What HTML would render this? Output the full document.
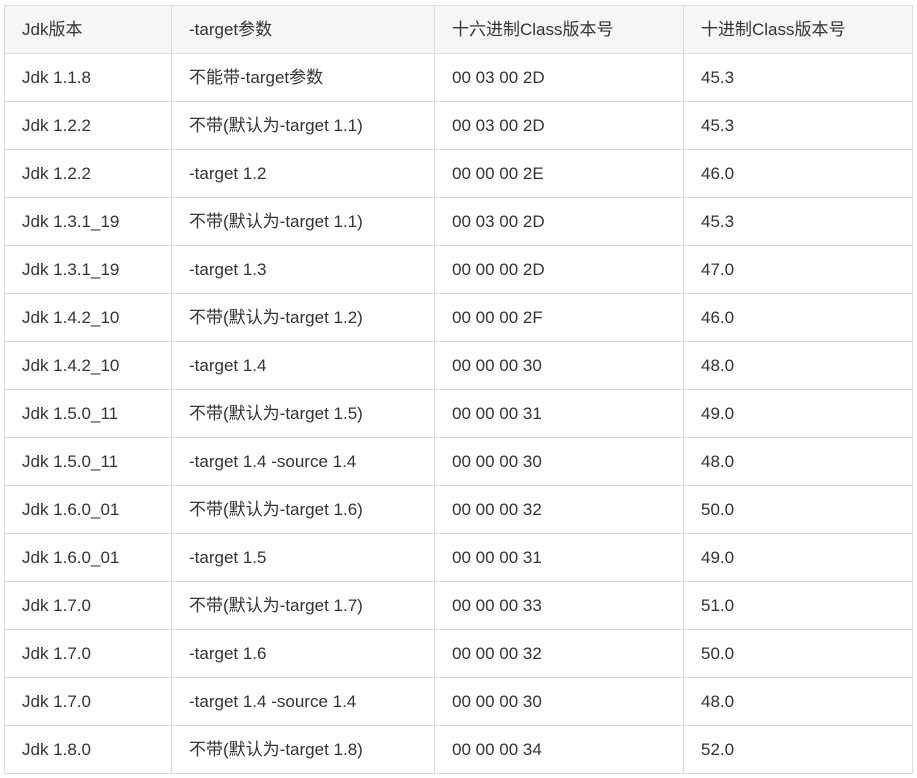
<!DOCTYPE html>
<html><head><meta charset="utf-8"><style>
body{margin:0;background:#fff;}
table{position:absolute;left:4px;top:5px;border-collapse:collapse;width:908px;table-layout:fixed;font-family:"Liberation Sans","Noto Sans CJK SC",sans-serif;font-size:17px;color:#333;}
td,th{border:1px solid #ddd;height:47px;padding:0 0 0 17px;text-align:left;font-weight:normal;white-space:nowrap;line-height:20px;vertical-align:middle;}
th{background:#f6f6f6;}
</style></head><body>
<table>
<colgroup><col style="width:167px"><col style="width:263px"><col style="width:249px"><col style="width:229px"></colgroup>
<tr><th>Jdk版本</th><th>-target参数</th><th>十六进制Class版本号</th><th>十进制Class版本号</th></tr>
<tr><td>Jdk 1.1.8</td><td>不能带-target参数</td><td>00 03 00 2D</td><td>45.3</td></tr>
<tr><td>Jdk 1.2.2</td><td>不带(默认为-target 1.1)</td><td>00 03 00 2D</td><td>45.3</td></tr>
<tr><td>Jdk 1.2.2</td><td>-target 1.2</td><td>00 00 00 2E</td><td>46.0</td></tr>
<tr><td>Jdk 1.3.1_19</td><td>不带(默认为-target 1.1)</td><td>00 03 00 2D</td><td>45.3</td></tr>
<tr><td>Jdk 1.3.1_19</td><td>-target 1.3</td><td>00 00 00 2D</td><td>47.0</td></tr>
<tr><td>Jdk 1.4.2_10</td><td>不带(默认为-target 1.2)</td><td>00 00 00 2F</td><td>46.0</td></tr>
<tr><td>Jdk 1.4.2_10</td><td>-target 1.4</td><td>00 00 00 30</td><td>48.0</td></tr>
<tr><td>Jdk 1.5.0_11</td><td>不带(默认为-target 1.5)</td><td>00 00 00 31</td><td>49.0</td></tr>
<tr><td>Jdk 1.5.0_11</td><td>-target 1.4 -source 1.4</td><td>00 00 00 30</td><td>48.0</td></tr>
<tr><td>Jdk 1.6.0_01</td><td>不带(默认为-target 1.6)</td><td>00 00 00 32</td><td>50.0</td></tr>
<tr><td>Jdk 1.6.0_01</td><td>-target 1.5</td><td>00 00 00 31</td><td>49.0</td></tr>
<tr><td>Jdk 1.7.0</td><td>不带(默认为-target 1.7)</td><td>00 00 00 33</td><td>51.0</td></tr>
<tr><td>Jdk 1.7.0</td><td>-target 1.6</td><td>00 00 00 32</td><td>50.0</td></tr>
<tr><td>Jdk 1.7.0</td><td>-target 1.4 -source 1.4</td><td>00 00 00 30</td><td>48.0</td></tr>
<tr><td>Jdk 1.8.0</td><td>不带(默认为-target 1.8)</td><td>00 00 00 34</td><td>52.0</td></tr>
</table>
</body></html>
